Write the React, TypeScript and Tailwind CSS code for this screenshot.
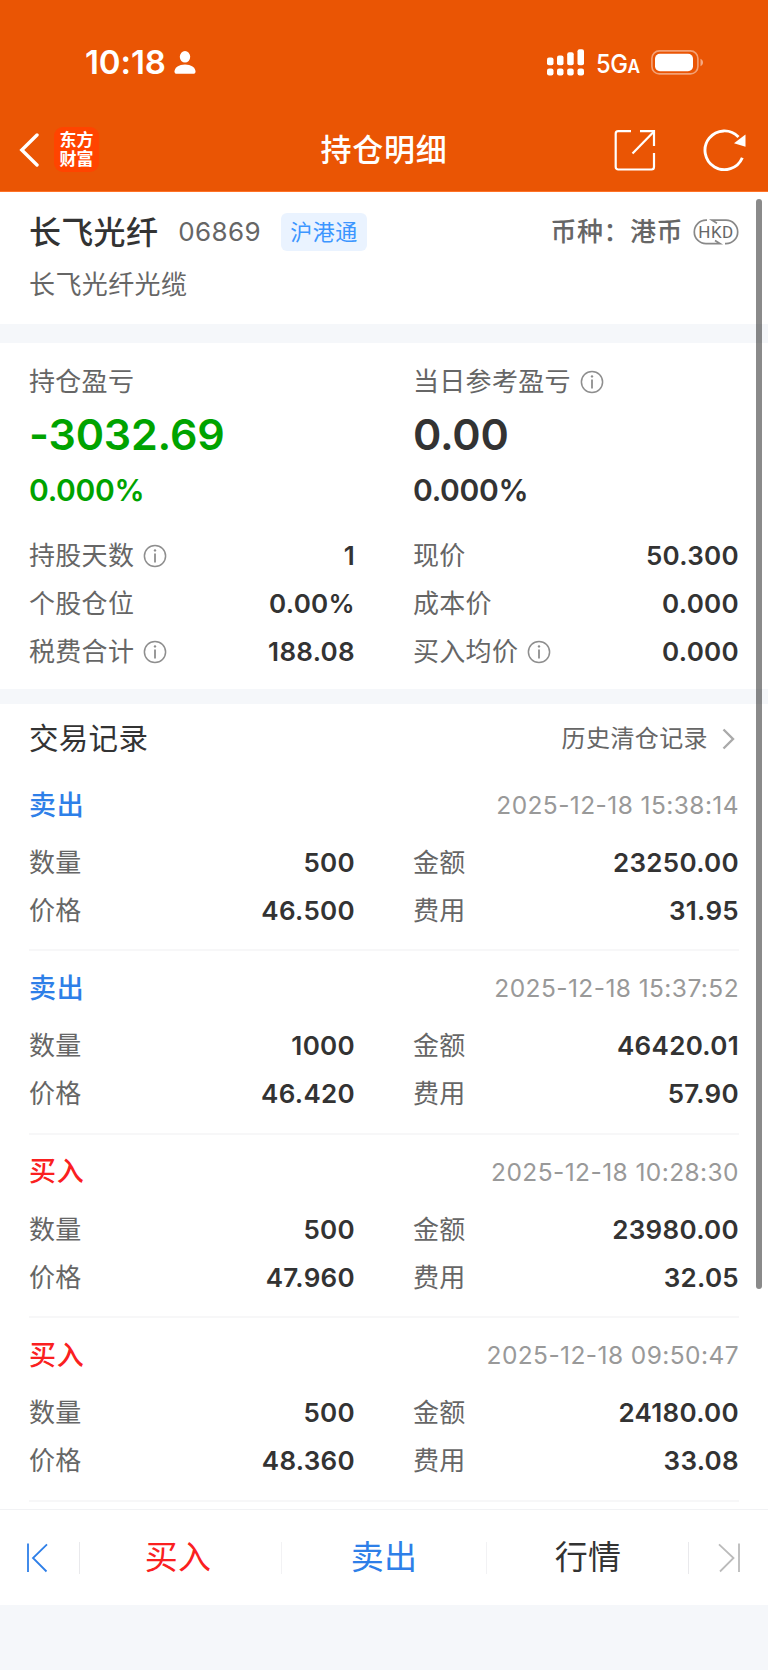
import clsx from 'clsx';
import { ReactNode } from 'react';

interface TradeRecord {
  side: 'buy' | 'sell';
  time: string;
  quantity: string;
  price: string;
  amount: string;
  fee: string;
}

const records: TradeRecord[] = [
  { side: 'sell', time: '2025-12-18 15:38:14', quantity: '500', price: '46.500', amount: '23250.00', fee: '31.95' },
  { side: 'sell', time: '2025-12-18 15:37:52', quantity: '1000', price: '46.420', amount: '46420.01', fee: '57.90' },
  { side: 'buy', time: '2025-12-18 10:28:30', quantity: '500', price: '47.960', amount: '23980.00', fee: '32.05' },
  { side: 'buy', time: '2025-12-18 09:50:47', quantity: '500', price: '48.360', amount: '24180.00', fee: '33.08' },
];

const sideStyles = {
  buy: { label: '买入', color: 'text-[#fa2020]' },
  sell: { label: '卖出', color: 'text-[#2e7fe8]' },
};

function InfoIcon() {
  return (
    <svg className="ml-[9px] h-6 w-6 text-[#8e8e8e]" viewBox="0 0 24 24" fill="none" stroke="currentColor">
      <circle cx="12" cy="12" r="10.6" strokeWidth="1.5" />
      <circle cx="12" cy="6.4" r="1.2" fill="currentColor" stroke="none" />
      <path d="M12 9.4v9" strokeWidth="1.8" />
    </svg>
  );
}

function Label({ children, info }: { children: ReactNode; info?: boolean }) {
  return (
    <span className="flex items-center text-[26px] tracking-[0.3px] text-[#666]">
      {children}
      {info && <InfoIcon />}
    </span>
  );
}

function Field({ label, value, info }: { label: string; value: string; info?: boolean }) {
  return (
    <div className="flex h-12 items-center justify-between">
      <Label info={info}>{label}</Label>
      <span className="text-[26px] font-semibold tracking-[0.3px] text-[#333]">{value}</span>
    </div>
  );
}

function StatusBar() {
  return (
    <div className="flex h-[108px] items-center justify-between pr-[64px] pl-[85px] pt-[17px]">
      <div className="flex items-center">
        <span className="text-[33px] font-semibold tracking-[-0.1px]">10:18</span>
        <svg className="ml-[8px] h-[23px] w-[22px]" viewBox="0 0 22 23" fill="currentColor">
          <ellipse cx="11" cy="5.8" rx="5.2" ry="5.8" />
          <path d="M0.5 20.5C0.5 16.5 5 13.4 11 13.4s10.5 3.1 10.5 7.1c0 1.5-.8 2.3-2.4 2.3H2.9C1.3 22.8 .5 22 .5 20.5z" />
        </svg>
      </div>
      <div className="flex items-center">
        <svg className="h-[27px] w-[38px]" viewBox="0 0 38 27" fill="currentColor">
          <rect x="0" y="8.5" width="6.5" height="7.7" rx="2" />
          <rect x="10" y="6.5" width="6.5" height="9.7" rx="2" />
          <rect x="20.2" y="3.2" width="6.5" height="13" rx="2" />
          <rect x="30.5" y="0.2" width="6.5" height="16" rx="2" />
          <rect x="0" y="19.4" width="6.5" height="7" rx="2.2" />
          <rect x="10" y="19.4" width="6.5" height="7" rx="2.2" />
          <rect x="20.2" y="19.4" width="6.5" height="7" rx="2.2" />
          <rect x="30.5" y="19.4" width="6.5" height="7" rx="2.2" />
        </svg>
        <span className="ml-[11px] flex w-[44px] origin-left scale-x-[0.91] items-baseline pt-[2px] text-[26px] font-medium tracking-[-0.5px]">
          5G<span className="text-[19px] font-semibold">A</span>
        </span>
        <svg className="ml-[11px] h-[25px] w-[53px]" viewBox="0 0 53 25" fill="currentColor">
          <rect x="0.9" y="0.9" width="46" height="23" rx="7.5" fill="none" stroke="currentColor" strokeOpacity="0.45" strokeWidth="1.6" />
          <rect x="4" y="3.8" width="38" height="17.4" rx="5" />
          <path d="M49.5 8.8c1.6.8 2.5 2 2.5 3.7s-.9 2.9-2.5 3.7z" fillOpacity="0.5" />
        </svg>
      </div>
    </div>
  );
}

function NavBar() {
  return (
    <div className="grid h-[83px] grid-cols-3 items-center">
      <div className="flex items-center pl-[19px]">
        <svg className="h-[34px] w-5" viewBox="0 0 20 34" fill="none" stroke="currentColor" strokeWidth="3.4">
          <path d="M18 2 2.8 17 18 32" strokeLinecap="round" />
        </svg>
        <div className="ml-[15px] flex h-[45px] w-[45px] flex-col items-center justify-center rounded-[9px] bg-[#ff4400] text-[17px] leading-[19px] font-bold">
          <span>东方</span>
          <span>财富</span>
        </div>
      </div>
      <h1 className="text-center text-[31px] font-medium tracking-[0.7px]">持仓明细</h1>
      <div className="flex items-center justify-end pr-[22px]">
        <svg className="h-[42px] w-[42px]" viewBox="0 0 42 42" fill="none" stroke="currentColor" strokeWidth="2.2">
          <path d="M17 2.2H4.2a2.5 2.5 0 0 0-2.5 2.5v33.3a2.5 2.5 0 0 0 2.5 2.5h33.3a2.5 2.5 0 0 0 2.5-2.5V24" />
          <path d="M26 2.2h14V17" />
          <path d="M18.5 24.5 39.5 3" />
        </svg>
        <svg className="ml-[47px] h-[42px] w-[43px]" viewBox="0 0 43 42" fill="none" stroke="currentColor" strokeWidth="2.9">
          <path d="M39.3 28.8A19.4 19.4 0 1 1 35.5 8" />
          <path d="M31 14.2 42.5 5.4v12.3z" fill="currentColor" stroke="none" />
        </svg>
      </div>
    </div>
  );
}

function HkdBadge() {
  return (
    <svg className="ml-[10px] h-[26px] w-[46px]" viewBox="0 0 46 26" fill="none" stroke="#888" strokeWidth="1.7">
      <path d="M14 1.2h-1A11.7 11.7 0 0 0 13 24.6h14l-5-3" />
      <path d="M32 24.6h1A11.7 11.7 0 0 0 33 1.2H19l5 3" />
      <text x="23" y="18.7" textAnchor="middle" fontSize="17" fontFamily="Roboto, sans-serif" fontWeight="400" fill="#666" stroke="none">
        HKD
      </text>
    </svg>
  );
}

function StockHeader() {
  return (
    <section className="h-[132px] bg-white pt-[18px] pr-[29px] pl-[29px]">
      <div className="flex h-[44px] items-center justify-between">
        <div className="flex items-center">
          <h2 className="pt-px text-[32px] font-medium tracking-[0.3px] text-[#333]">长飞光纤</h2>
          <span className="ml-[20px] text-[26px] tracking-[0.4px] text-[#666]">06869</span>
          <span className="ml-[20px] flex h-[38px] w-[86px] items-center justify-center rounded-md bg-[#eaf3ff] text-[22px] tracking-[0.6px] text-[#3c96ff]">
            沪港通
          </span>
        </div>
        <div className="flex items-center text-[26px] font-medium tracking-[0.5px] text-[#666]">
          <span>币种：</span>
          <span>港币</span>
          <HkdBadge />
        </div>
      </div>
      <p className="flex h-[61px] items-center pt-px text-[26px] tracking-[0.4px] text-[#666]">长飞光纤光缆</p>
    </section>
  );
}

function Profit({ label, value, percent, info, color }: { label: string; value: string; percent: string; info?: boolean; color: string }) {
  return (
    <div className={clsx('flex flex-col font-semibold', color)}>
      <div className="flex h-[44px] items-center font-normal">
        <Label info={info}>{label}</Label>
      </div>
      <div className="flex h-[60px] items-center text-[43px] tracking-[-0.2px]">{value}</div>
      <div className="flex h-[52px] items-center text-[30px] tracking-[-0.3px]">{percent}</div>
    </div>
  );
}

function PositionSummary() {
  return (
    <section className="h-[346px] bg-white pt-[17px] pr-[29px] pl-[29px]">
      <div className="grid grid-cols-[326px_326px] gap-x-[58px]">
        <Profit label="持仓盈亏" value="-3032.69" percent="0.000%" color="text-[#00a300]" />
        <Profit label="当日参考盈亏" value="0.00" percent="0.000%" color="text-[#333]" info />
      </div>
      <div className="mt-[15.5px] grid grid-cols-[326px_326px] gap-x-[58px]">
        <Field label="持股天数" value="1" info />
        <Field label="现价" value="50.300" />
        <Field label="个股仓位" value="0.00%" />
        <Field label="成本价" value="0.000" />
        <Field label="税费合计" value="188.08" info />
        <Field label="买入均价" value="0.000" info />
      </div>
    </section>
  );
}

function RecordItem({ record }: { record: TradeRecord }) {
  const side = sideStyles[record.side];
  return (
    <li className="h-[183.4px] border-b-2 border-[#f7f7f8] pt-[15px]">
      <div className="flex h-[44px] items-center justify-between">
        <span className={clsx('text-[27px] font-medium tracking-[0.8px]', side.color)}>{side.label}</span>
        <span className="text-[24.5px] tracking-[0.42px] text-[#999]">{record.time}</span>
      </div>
      <div className="mt-[12px] grid grid-cols-[326px_326px] gap-x-[58px]">
        <Field label="数量" value={record.quantity} />
        <Field label="金额" value={record.amount} />
        <Field label="价格" value={record.price} />
        <Field label="费用" value={record.fee} />
      </div>
    </li>
  );
}

function TradeRecords() {
  return (
    <section className="h-[805px] overflow-hidden bg-white pr-[29px] pl-[29px]">
      <div className="flex h-[64px] items-center justify-between pt-[6px]">
        <h3 className="text-[29.5px] tracking-[0.3px] text-[#333]">交易记录</h3>
        <div className="flex items-center text-[24px] tracking-[0.4px] text-[#666]">
          历史清仓记录
          <svg className="mr-[4px] ml-[14px] h-[22px] w-[13px]" viewBox="0 0 13 22" fill="none" stroke="#aaa" strokeWidth="2.4">
            <path d="M1.5 1.5 11 11l-9.5 9.5" />
          </svg>
        </div>
      </div>
      <ul>
        {records.map((record) => (
          <RecordItem key={record.time} record={record} />
        ))}
      </ul>
    </section>
  );
}

function BottomBar() {
  return (
    <footer className="flex h-24 items-center border-t border-[#f1f2f4] bg-white text-[33px] tracking-[0.3px]">
      <div className="flex h-8 w-[80px] items-center border-r border-[#e9e9ec] pl-[26px]">
        <svg className="h-[30px] w-[22px] text-[#2e7fe8]" viewBox="0 0 22 30" fill="none" stroke="currentColor" strokeWidth="1.8">
          <path d="M2 0.5v28.5M21 1.3 7 15l13.5 13.5" />
        </svg>
      </div>
      <div className="flex h-8 w-[202px] items-center justify-center border-r border-[#f2f2f4] pr-[5px] text-[#fa2020]">买入</div>
      <div className="flex h-8 w-[205px] items-center justify-center border-r border-[#f2f2f4] text-[#2e7fe8]">卖出</div>
      <div className="flex h-8 w-[202px] items-center justify-center border-r border-[#e9e9ec] pl-px text-[#333]">行情</div>
      <div className="flex flex-1 items-center justify-end pr-[28px]">
        <svg className="h-[30px] w-[22px] text-[#bbb]" viewBox="0 0 22 30" fill="none" stroke="currentColor" strokeWidth="1.8">
          <path d="M21 0.5v28.5M1 1.3 15.5 15 2 28.5" />
        </svg>
      </div>
    </footer>
  );
}

export default function App() {
  return (
    <div className="relative flex h-[1670px] w-[768px] flex-col overflow-hidden bg-[#f5f7fa] font-[Inter,'Noto_Sans_CJK_SC',sans-serif] leading-none">
      <header className="h-[192px] border-b border-[#ff7226] bg-[#ea5504] text-white">
        <StatusBar />
        <NavBar />
      </header>
      <StockHeader />
      <div className="h-[19px]" />
      <PositionSummary />
      <div className="h-[15px]" />
      <TradeRecords />
      <BottomBar />

      {/* Scroll indicator */}
      <div className="absolute top-[199px] right-[6px] h-[1090px] w-[6px] rounded-full bg-black/46" />
    </div>
  );
}
